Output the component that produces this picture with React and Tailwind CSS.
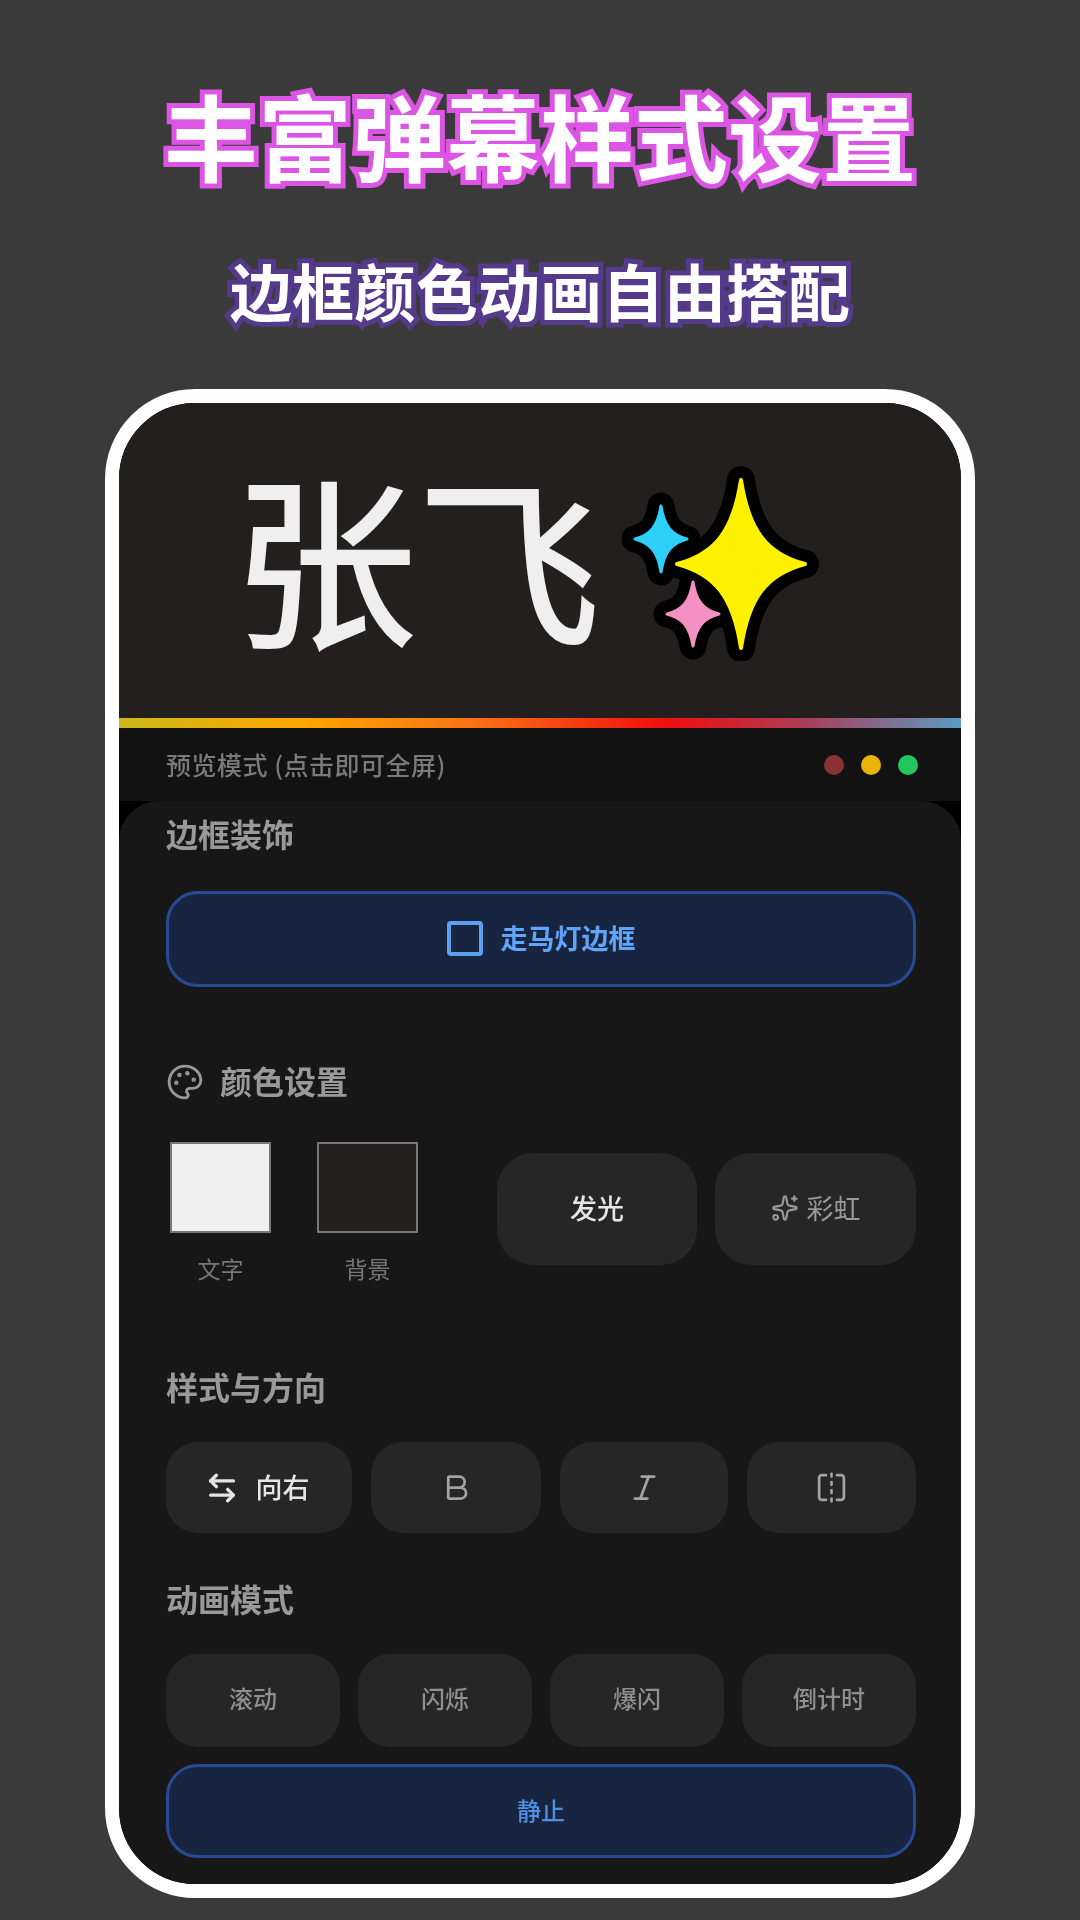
import { ArrowLeftRight, Bold, Italic, Palette, Sparkles } from "lucide-react";

const star = (cx, cy, rx, ry) => {
  const a = rx * 0.12;
  const b = ry * 0.12;
  const c = rx * 0.4;
  const d = ry * 0.4;
  return [
    `M${cx} ${cy - ry}`,
    `C${cx + a} ${cy - d} ${cx + c} ${cy - b} ${cx + rx} ${cy}`,
    `C${cx + c} ${cy + b} ${cx + a} ${cy + d} ${cx} ${cy + ry}`,
    `C${cx - a} ${cy + d} ${cx - c} ${cy + b} ${cx - rx} ${cy}`,
    `C${cx - c} ${cy - b} ${cx - a} ${cy - d} ${cx} ${cy - ry}Z`,
  ].join("");
};

const stars = [
  { d: star(127, 103, 64, 84), c: "#fff200", w: 4 },
  { d: star(47, 78, 26, 33), c: "#2fd0f7", w: 3 },
  { d: star(79, 153, 26, 32), c: "#f291c2", w: 3 },
];

function Stars() {
  return (
    <svg width="210" height="200" viewBox="0 0 210 200" className="ml-[13px] shrink-0" aria-hidden="true">
      {stars.map((s, i) => (
        <path key={i} d={s.d} fill="#000" stroke="#000" strokeWidth={s.w + 24} strokeLinejoin="round" />
      ))}
      {stars.map((s, i) => (
        <path key={i} d={s.d} fill={s.c} stroke={s.c} strokeWidth={s.w} strokeLinejoin="round" />
      ))}
    </svg>
  );
}

function FlipIcon() {
  return (
    <svg width="33" height="33" viewBox="0 0 24 24" fill="none" stroke="currentColor" strokeWidth="2" strokeLinecap="round" strokeLinejoin="round" aria-hidden="true">
      <path d="M8 3H5a2 2 0 0 0-2 2v14c0 1.1.9 2 2 2h3" />
      <path d="M16 3h3a2 2 0 0 1 2 2v14a2 2 0 0 1-2 2h-3" />
      <path d="M12 20v2" />
      <path d="M12 14v2" />
      <path d="M12 8v2" />
      <path d="M12 2v2" />
    </svg>
  );
}

function Heading({ children, className = "" }) {
  return <div className={`h-10 text-[32px] leading-[34px] font-bold text-[#999999] ${className}`}>{children}</div>;
}

function Tool({ children, className = "" }) {
  return (
    <div className={`flex h-[91px] items-center justify-center rounded-[32px] bg-[#262626] text-[#a3a3a3] ${className}`}>
      {children}
    </div>
  );
}

function Swatch({ color, label }) {
  return (
    <div className="flex w-[101px] flex-col items-center">
      <div className={`h-[91px] w-[101px] border-2 border-[#777777] ${color}`} />
      <div className="mt-[18px] text-[23px] leading-[34px] text-[#777777]">{label}</div>
    </div>
  );
}

export default function App() {
  return (
    <div
      className="flex h-[1920px] w-[1080px] flex-col items-center overflow-hidden bg-[#3a3a3a] pt-[66px]"
      style={{ fontFamily: '"Noto Sans CJK SC", "Noto Sans", sans-serif' }}
    >
      <h1 className="h-[136px] text-[94px] leading-[136px] font-bold text-white [-webkit-text-stroke:10px_#dd55e5] [paint-order:stroke_fill]">
        丰富弹幕样式设置
      </h1>
      <h2 className="mt-[40px] h-[96px] text-[62px] leading-[96px] font-bold text-white [-webkit-text-stroke:10px_#553a8c] [paint-order:stroke_fill]">
        边框颜色动画自由搭配
      </h2>
      <div className="mt-[51px] h-[1509px] w-[870px] shrink-0 rounded-[90px] border-[14px] border-white bg-black">
        <div className="flex h-full flex-col overflow-hidden rounded-[76px] blur-[0.6px]">
          <div className="flex h-[315px] shrink-0 items-center justify-center bg-[#231f1f] pr-[24px]">
            <span className="mb-[14px] text-[184px] leading-none font-normal text-[#efefef] [-webkit-text-stroke:2px_#efefef]">张飞</span>
            <Stars />
          </div>
          <div className="h-[10px] shrink-0 bg-[linear-gradient(90deg,#cdb81a_0%,#ffa500_22%,#f97316_42%,#f20d0d_65%,#a8405a_82%,#5b9bc4_100%)]" />
          <div className="flex h-[73px] shrink-0 items-center justify-between bg-[#121212] pl-[47px] pr-[43px]">
            <span className="text-[25px] font-medium tracking-[0.5px] text-[#7a7a7a]">预览模式 (点击即可全屏)</span>
            <div className="flex items-center gap-[17px]">
              <span className="h-5 w-5 rounded-full bg-[#8a3232]" />
              <span className="h-5 w-5 rounded-full bg-[#eab308]" />
              <span className="h-5 w-5 rounded-full bg-[#22c55e]" />
            </div>
          </div>
          <div className="flex-1 rounded-t-[40px] bg-[#171717] pl-[47px] pr-[45px] pt-[15px]">
            <Heading>边框装饰</Heading>
            <div className="mt-[35px] flex h-[96px] items-center justify-center gap-[18px] rounded-[32px] border-[3px] border-[#264a94] bg-[#182540] pb-[2px] text-[27px] font-bold text-[#60a5fa]">
              <span className="h-[35px] w-[36px] rounded-[4px] border-[4px] border-[#60a0f0]" />
              走马灯边框
            </div>

            <Heading className="mt-[76px] flex items-start gap-[16px]">
              <Palette size={38} strokeWidth={1.8} className="shrink-0" />
              颜色设置
            </Heading>
            <div className="mt-[39px] flex h-[141px] items-start pl-[4px]">
              <div className="flex gap-[46px]">
                <Swatch color="bg-[#f0f0f0]" label="文字" />
                <Swatch color="bg-[#231f1f]" label="背景" />
              </div>
              <div className="ml-[79px] mt-[11px] flex gap-[18px]">
                <div className="flex h-[112px] w-[200px] items-center justify-center rounded-[36px] bg-[#262626] pb-[2px] text-[27px] font-medium text-[#e5e5e5]">
                  发光
                </div>
                <div className="flex h-[112px] w-[201px] items-center justify-center gap-[8px] rounded-[36px] bg-[#262626] pb-[2px] text-[27px] text-[#999999]">
                  <Sparkles size={28} strokeWidth={1.8} />
                  彩虹
                </div>
              </div>
            </div>

            <Heading className="mt-[86px]">样式与方向</Heading>
            <div className="mt-[33px] flex gap-[19px]">
              <Tool className="w-[186px] gap-[17px] pr-[4px] text-[27px] font-medium text-[#e5e5e5]">
                <ArrowLeftRight size={34} strokeWidth={2.4} />
                向右
              </Tool>
              <Tool className="w-[170px]">
                <Bold size={33} strokeWidth={2} />
              </Tool>
              <Tool className="w-[168px]">
                <Italic size={33} strokeWidth={2} />
              </Tool>
              <Tool className="w-[169px]">
                <FlipIcon />
              </Tool>
            </div>

            <Heading className="mt-[48px]">动画模式</Heading>
            <div className="mt-[33px] grid grid-cols-4 gap-[18px] text-[24px] font-medium text-[#8f8f8f]">
              {["滚动", "闪烁", "爆闪", "倒计时"].map((t) => (
                <div key={t} className="flex h-[93px] items-center justify-center rounded-[32px] bg-[#262626] pb-[5px]">
                  {t}
                </div>
              ))}
            </div>
            <div className="mt-[17px] flex h-[94px] items-center justify-center rounded-[32px] border-[3px] border-[#264a94] bg-[#182540] pb-[3px] text-[24px] font-medium text-[#4f8fe0]">
              静止
            </div>
          </div>
        </div>
      </div>
    </div>
  );
}
